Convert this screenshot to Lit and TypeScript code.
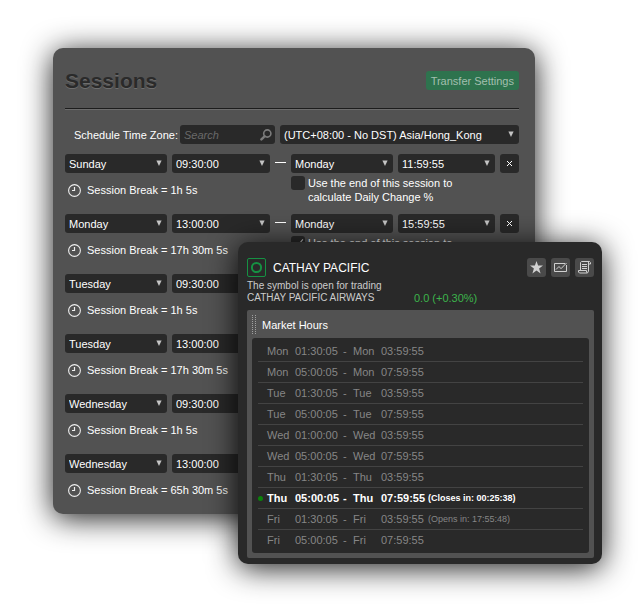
import { LitElement, html, css, svg, nothing } from "lit";
import { customElement } from "lit/decorators.js";
import { classMap } from "lit/directives/class-map.js";

interface Session {
  fromDay: string;
  from: string;
  gap: string;
  end?: { day: string; time: string; daily: boolean; label: string };
}

const SESSIONS: Session[] = [
  {
    fromDay: "Sunday",
    from: "09:30:00",
    gap: "1h 5s",
    end: {
      day: "Monday",
      time: "11:59:55",
      daily: false,
      label: "Use the end of this session to calculate Daily Change %",
    },
  },
  {
    fromDay: "Monday",
    from: "13:00:00",
    gap: "17h 30m 5s",
    end: { day: "Monday", time: "15:59:55", daily: true, label: "Use the end of this session to" },
  },
  { fromDay: "Tuesday", from: "09:30:00", gap: "1h 5s" },
  { fromDay: "Tuesday", from: "13:00:00", gap: "17h 30m 5s" },
  { fromDay: "Wednesday", from: "09:30:00", gap: "1h 5s" },
  { fromDay: "Wednesday", from: "13:00:00", gap: "65h 30m 5s" },
];

const HOURS: { day: string; from: string; to: string; note?: string; open?: boolean }[] = [
  { day: "Mon", from: "01:30:05", to: "03:59:55" },
  { day: "Mon", from: "05:00:05", to: "07:59:55" },
  { day: "Tue", from: "01:30:05", to: "03:59:55" },
  { day: "Tue", from: "05:00:05", to: "07:59:55" },
  { day: "Wed", from: "01:00:00", to: "03:59:55" },
  { day: "Wed", from: "05:00:05", to: "07:59:55" },
  { day: "Thu", from: "01:30:05", to: "03:59:55" },
  { day: "Thu", from: "05:00:05", to: "07:59:55", note: "(Closes in: 00:25:38)", open: true },
  { day: "Fri", from: "01:30:05", to: "03:59:55", note: "(Opens in: 17:55:48)" },
  { day: "Fri", from: "05:00:05", to: "07:59:55" },
];

const base = css`
  * {
    box-sizing: border-box;
    margin: 0;
  }
  button,
  input,
  select {
    font: inherit;
    color: inherit;
    border: 0;
    padding: 0;
  }
  svg {
    display: block;
  }
`;

@customElement("sessions-panel")
export class SessionsPanel extends LitElement {
  static styles = [
    base,
    css`
      :host {
        display: block;
        padding: 12px 16px 15px 12px;
        border-radius: 10px;
        background: #525252;
        color: #fff;
        box-shadow: 0 4px 30px rgba(0, 0, 0, 0.9);
      }
      .head {
        display: flex;
        align-items: flex-start;
        justify-content: space-between;
        height: 49px;
        margin-bottom: 16px;
        padding-top: 9px;
        border-bottom: 1px solid #1c1c1c;
        box-shadow: 0 1px #6c6c6c;
      }
      h1 {
        font-size: 21px;
        line-height: 24px;
        color: #2a2a2a;
        text-shadow: 0 1px #6e6e6e;
      }
      .transfer {
        height: 19px;
        margin-top: 2px;
        padding: 0 5px;
        border-radius: 3px;
        background: #2e734e;
        color: #a3bfaf;
      }
      .zone {
        display: flex;
        gap: 5px;
        align-items: center;
        margin-bottom: 10px;
        padding-left: 9px;
      }
      .zone label {
        width: 101px;
        white-space: nowrap;
      }
      .search {
        display: flex;
        align-items: center;
        width: 95px;
        height: 19px;
        padding: 0 3px 0 4px;
        border-radius: 3px;
        background: #292929;
      }
      .search input {
        flex: 1;
        min-width: 0;
        background: none;
        outline: 0;
      }
      .search input::placeholder {
        color: #6a6a6a;
        font-style: italic;
        opacity: 1;
      }
      .pick {
        display: grid;
        align-items: center;
        flex: 1;
      }
      .pick select,
      .pick svg {
        grid-area: 1 / 1;
      }
      .pick select {
        appearance: none;
        width: 100%;
        height: 19px;
        padding: 0 18px 0 4px;
        border-radius: 3px;
        background: #292929;
        outline: 0;
      }
      .pick svg {
        justify-self: end;
        margin-right: 4px;
        pointer-events: none;
      }
      .session {
        display: grid;
        grid-template-columns: 102fr 98fr 11px 102fr 97fr 19px;
        grid-template-rows: 19px 1fr;
        column-gap: 5px;
        height: 60px;
      }
      .session:last-child {
        height: 45px;
      }
      .dash {
        height: 1px;
        margin-top: 8px;
        background: #fff;
      }
      .remove {
        display: grid;
        place-items: center;
        height: 19px;
        border-radius: 3px;
        background: #292929;
      }
      .break {
        grid-row: 2;
        grid-column: 1 / 4;
        display: flex;
        align-items: center;
        gap: 6px;
        height: 14px;
        margin-top: 10px;
        padding-left: 3px;
      }
      .daily {
        grid-row: 2;
        grid-column: 4 / 7;
        display: flex;
        gap: 3px;
        margin-top: 3px;
        line-height: 14px;
      }
      .daily input {
        appearance: none;
        flex: none;
        width: 14px;
        height: 14px;
        border-radius: 3px;
        background: #292929;
      }
      .daily input:checked::after {
        content: "";
        display: block;
        width: 4px;
        height: 8px;
        margin: 1px 5px;
        border: solid #ccc;
        border-width: 0 1px 1px 0;
        transform: rotate(40deg);
      }
      .daily span {
        width: 160px;
      }
    `,
  ];

  private pick(label: string, value: string) {
    return html`<div class="pick">
      <select aria-label=${label}>
        <option>${value}</option>
      </select>
      <svg width="8" height="7" viewBox="0 0 8 7"><path d="M1.4 0.5h5.2L4 6z" fill="#c4c4c4" /></svg>
    </div>`;
  }

  private end(end: Session["end"]) {
    if (!end) return nothing;
    return html`
      <div class="dash"></div>
      ${this.pick("End day", end.day)} ${this.pick("End time", end.time)}
      <button class="remove" aria-label="Remove session">
        <svg width="7" height="7" viewBox="0 0 7 7" stroke="#fff"><path d="M1 1l5 5M6 1L1 6" /></svg>
      </button>
      <label class="daily">
        <input type="checkbox" ?checked=${end.daily} />
        <span>${end.label}</span>
      </label>
    `;
  }

  render() {
    return html`
      <header class="head">
        <h1>Sessions</h1>
        <button class="transfer">Transfer Settings</button>
      </header>
      <div class="zone">
        <label for="search">Schedule Time Zone:</label>
        <div class="search">
          <input id="search" type="text" placeholder="Search" />
          <svg width="12" height="12" viewBox="0 0 12 12" fill="none" stroke="#7c7c7c">
            <circle cx="7.3" cy="4.5" r="3.6" stroke-width="1.6" />
            <path d="M4.6 7.4 1.4 10.4" stroke-width="2.4" stroke-linecap="round" />
          </svg>
        </div>
        ${this.pick("Time zone", "(UTC+08:00 - No DST) Asia/Hong_Kong")}
      </div>
      ${SESSIONS.map(
        (s) => html`<section class="session">
          ${this.pick("Start day", s.fromDay)} ${this.pick("Start time", s.from)} ${this.end(s.end)}
          <div class="break">
            <svg width="13" height="13" viewBox="0 0 13 13" fill="none" stroke="#eee">
              <circle cx="6.5" cy="6.5" r="5.9" stroke-width="1.1" />
              <path d="M6.5 3v3.5H4" stroke-width="1.2" />
            </svg>
            <span>Session Break = ${s.gap}</span>
          </div>
        </section>`,
      )}
    `;
  }
}

@customElement("symbol-card")
export class SymbolCard extends LitElement {
  static styles = [
    base,
    css`
      :host {
        display: block;
        padding: 16px 8px 6px 9px;
        border-radius: 10px;
        background: #292929;
        color: #ccc;
        box-shadow: 0 4px 30px rgba(0, 0, 0, 0.9);
      }
      .top {
        display: flex;
        align-items: center;
        gap: 5px;
        height: 19px;
      }
      h2 {
        flex: 1;
        margin-left: 2px;
        font-size: 12px;
        font-weight: 400;
        color: #fff;
      }
      .tool {
        display: grid;
        place-items: center;
        width: 19px;
        height: 19px;
        border-radius: 3px;
        background: #4a4a4a;
      }
      .status {
        margin-top: 3px;
        font-size: 10px;
        line-height: 12px;
      }
      .quote {
        display: grid;
        grid-template-columns: 167px 1fr;
        font-size: 10px;
        line-height: 12px;
      }
      .change {
        font-size: 11px;
        color: #3cb44b;
      }
      .hours {
        margin-top: 6px;
        padding: 3px 5px 5px;
        border-radius: 2px;
        background: #525252;
      }
      .bar {
        display: flex;
        align-items: center;
        gap: 6px;
        height: 24px;
        margin-bottom: 1px;
      }
      .grip {
        width: 4px;
        height: 20px;
      }
      h3 {
        font-size: 11px;
        font-weight: 400;
        color: #fff;
      }
      .list {
        padding: 3px 6px 2px;
        border-radius: 3px;
        background: #292929;
      }
      table {
        width: 100%;
        border-spacing: 0;
        table-layout: fixed;
        color: #868686;
      }
      td {
        height: 21px;
        padding: 0;
        border-bottom: 1px solid #434343;
        white-space: nowrap;
      }
      tr:last-child td {
        border-color: transparent;
      }
      .mark {
        width: 9px;
      }
      .mark i {
        display: block;
        width: 5px;
        height: 5px;
        border-radius: 50%;
        background: #0a820a;
      }
      .day {
        width: 28px;
      }
      .time {
        width: 48px;
      }
      .to {
        width: 10px;
      }
      .end {
        width: 47px;
      }
      .note {
        font-size: 9px;
      }
      .open {
        color: #fff;
        font-weight: 700;
      }
    `,
  ];

  render() {
    const dots = Array.from({ length: 10 }, (_, i) =>
      svg`<path d=${`M0 ${i * 2 + 0.5}h1m2 0h1`} stroke="#a0a0a0" />`,
    );
    return html`
      <header class="top">
        <svg width="19" height="19" viewBox="0 0 19 19" fill="none" stroke="#169143">
          <rect x="0.5" y="0.5" width="18" height="18" rx="1.5" />
          <circle cx="9.5" cy="9.5" r="4.6" stroke-width="2" />
        </svg>
        <h2>CATHAY PACIFIC</h2>
        <button class="tool" aria-label="Favourite">
          <svg width="13" height="13" viewBox="0 0 13 13" fill="#d0d0d0">
            <path d="M6.5 0l1.6 4.6H13L9.1 7.6l1.5 4.9-4.1-3-4.1 3 1.5-4.9L0 4.6h4.9z" />
          </svg>
        </button>
        <button class="tool" aria-label="Chart">
          <svg width="13" height="11" viewBox="0 0 13 11" fill="none" stroke="#d0d0d0">
            <path d="M11 1.5H.5v8h12V3M2 7.5l3-3 2 2.2L12.5 1" />
          </svg>
        </button>
        <button class="tool" aria-label="Details">
          <svg width="13" height="13" viewBox="0 0 13 13" fill="none" stroke="#d0d0d0">
            <path d="M2.5 9V1.5l1-1h8l1 1v1.5h-2v7l-1 2h-8l-1-1V9.5h8v2M10.5 3V.5M4 3.5h5M4 5.5h5M4 7.5h5" />
          </svg>
        </button>
      </header>
      <p class="status">The symbol is open for trading</p>
      <div class="quote">
        <span>CATHAY PACIFIC AIRWAYS</span>
        <span class="change">0.0 (+0.30%)</span>
      </div>
      <section class="hours">
        <div class="bar">
          <svg class="grip" viewBox="0 0 4 20">${dots}</svg>
          <h3>Market Hours</h3>
        </div>
        <div class="list">
          <table>
            <tbody>
              ${HOURS.map(
                (h) => html`<tr class=${classMap({ open: !!h.open })}>
                  <td class="mark">${h.open ? html`<i></i>` : ""}</td>
                  <td class="day">${h.day}</td>
                  <td class="time">${h.from}</td>
                  <td class="to">-</td>
                  <td class="day">${h.day}</td>
                  <td class="end">${h.to}</td>
                  <td class="note">${h.note ?? ""}</td>
                </tr>`,
              )}
            </tbody>
          </table>
        </div>
      </section>
    `;
  }
}

@customElement("app-root")
export class AppRoot extends LitElement {
  static styles = css`
    :host {
      display: block;
      position: relative;
      padding: 48px 103px 91px 53px;
      overflow: hidden;
      background: #fff;
      font: 11px/14px "Liberation Sans", Arial, sans-serif;
    }
    .over {
      position: absolute;
      top: 242px;
      left: 238px;
      right: 36px;
    }
  `;

  render() {
    return html`
      <sessions-panel></sessions-panel>
      <symbol-card class="over"></symbol-card>
    `;
  }
}
